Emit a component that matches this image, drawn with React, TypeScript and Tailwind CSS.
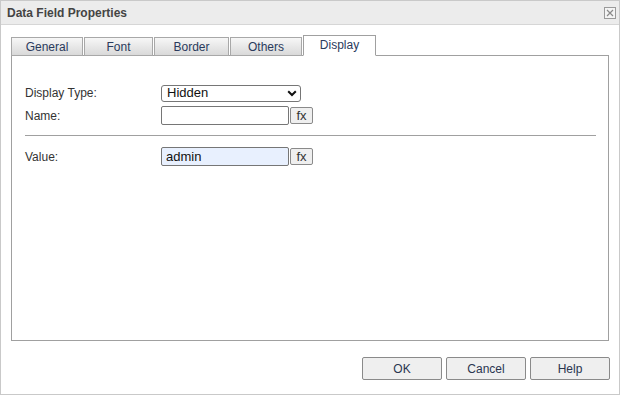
import type { ReactNode } from "react";

const FONT = "font-['Tahoma','Liberation_Sans',sans-serif]";

const TABS = [
  { label: "General", width: "w-[72px]" },
  { label: "Font", width: "w-[69px]" },
  { label: "Border", width: "w-[75px]" },
  { label: "Others", width: "w-[72px]" },
];

function FxButton() {
  return (
    <button
      type="button"
      className="ml-px flex h-[17px] w-[23px] items-center justify-center rounded-[2px] border border-[#8a8a8a] bg-[#efefef] text-[13px] leading-none text-[#333]"
    >
      fx
    </button>
  );
}

function Row({ label, children }: { label: string; children: ReactNode }) {
  return (
    <div className="flex items-center">
      <span className="w-[136px] text-[12px] text-[#333]">{label}</span>
      {children}
    </div>
  );
}

function DialogButton({ label }: { label: string }) {
  return (
    <button
      type="button"
      className="h-[23px] w-[80px] rounded-[2px] border border-[#8a8a8a] bg-[#efefef] text-[12px] text-[#2a3550]"
    >
      {label}
    </button>
  );
}

export default function App() {
  return (
    <div
      className={`${FONT} flex h-[395px] w-[620px] flex-col border border-[#c9c9c9] bg-white`}
    >
      <div className="flex h-[24px] shrink-0 items-center justify-between border-b border-[#d6d6d6] bg-[#ececec] pl-[6px] pr-[3px] pt-px">
        <span className="text-[12px] font-bold text-[#444]">Data Field Properties</span>
        <span className="flex h-[12px] w-[12px] items-center justify-center border border-[#9a9a9a] bg-[#f4f4f4]">
          <svg width="8" height="8" viewBox="0 0 8 8">
            <path d="M1 1 L7 7 M7 1 L1 7" stroke="#8a8a8a" strokeWidth="1.2" />
          </svg>
        </span>
      </div>

      <div className="flex flex-1 flex-col px-[10px] pt-[10px]">
        <div className="relative z-10 -mb-px flex items-end gap-px">
          {TABS.map((tab) => (
            <div
              key={tab.label}
              className={`${tab.width} flex h-[19px] items-center justify-center border border-[#a8a8a8] bg-gradient-to-b from-[#f7f7f7] to-[#d9d9d9] text-[12px] text-[#2a3a5c]`}
            >
              {tab.label}
            </div>
          ))}
          <div className="flex h-[21px] w-[73px] items-center justify-center border border-b-white border-[#a0a0a0] bg-white pb-[2px] text-[12px] text-[#2a3a5c]">
            Display
          </div>
        </div>

        <div className="flex h-[286px] flex-col border border-[#a0a0a0] px-[13px] pt-[28px]">
          <div className="flex flex-col gap-[4px]">
            <Row label="Display Type:">
              <div className="flex h-[17px] w-[140px] items-center justify-between rounded-[3px] border border-[#767676] bg-white pl-[5px] pr-[3px] text-[13px] text-[#111]">
                <span>Hidden</span>
                <svg width="10" height="7" viewBox="0 0 10 7">
                  <path d="M1.2 1.2 L5 5 L8.8 1.2" fill="none" stroke="#111" strokeWidth="2" />
                </svg>
              </div>
            </Row>
            <Row label="Name:">
              <input
                readOnly
                className="h-[19px] w-[128px] rounded-[2px] border border-[#767676] bg-white px-[4px] text-[13px] outline-none"
              />
              <FxButton />
            </Row>
          </div>

          <div className="mt-[10px] mr-[-1px] border-t border-[#a0a0a0]" />

          <div className="mt-[11px]">
            <Row label="Value:">
              <input
                readOnly
                value="admin"
                className="h-[19px] w-[128px] rounded-[2px] border border-[#767676] bg-[#e8f0fe] px-[4px] text-[13px] text-[#111] outline-none"
              />
              <FxButton />
            </Row>
          </div>
        </div>

        <div className="mt-[16px] mr-[-1px] flex justify-end gap-[4px]">
          <DialogButton label="OK" />
          <DialogButton label="Cancel" />
          <DialogButton label="Help" />
        </div>
      </div>
    </div>
  );
}
